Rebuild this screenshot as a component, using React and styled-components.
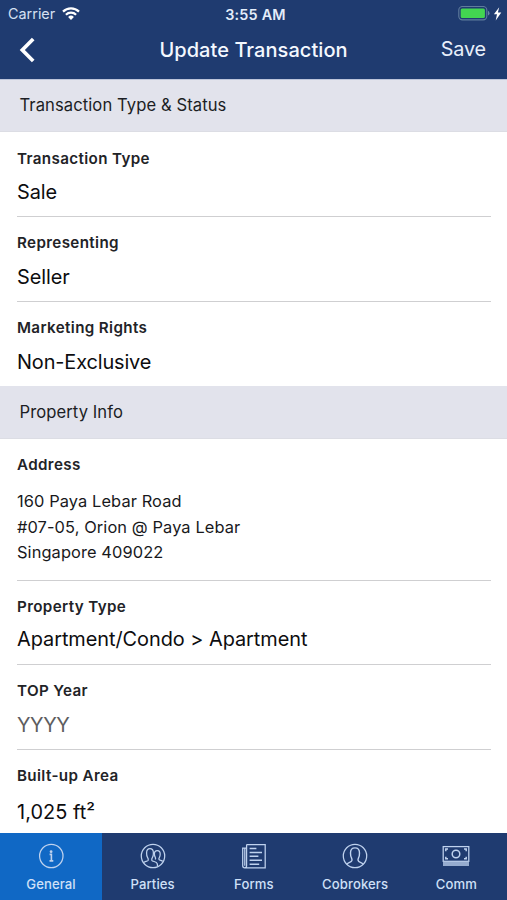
import React from "react";
import styled, { createGlobalStyle } from "styled-components";

const GlobalStyle = createGlobalStyle`
  *, *::before, *::after { box-sizing: border-box; }
  body {
    margin: 0;
    background: #fff;
    font-family: Inter, "Liberation Sans", sans-serif;
    color: #101114;
  }
`;

const Screen = styled.div`
  display: flex;
  flex-direction: column;
  height: 900px;
  overflow: hidden;
  background: #fff;
`;

const Header = styled.header`
  flex: none;
  height: 79px;
  background: #1f3b70;
  color: #f4f8ff;
  box-shadow: 0 1px 0 #bcc4da;
  z-index: 1;
`;

const StatusBar = styled.div`
  display: grid;
  grid-template-columns: 1fr auto 1fr;
  align-items: center;
  height: 28px;
  padding: 0 4px 0 8px;
`;

const Carrier = styled.div`
  display: flex;
  align-items: center;
  gap: 7px;
  font-size: 14.4px;
  line-height: 28px;
  color: #d5e0f2;
`;

const Clock = styled.div`
  font-size: 14.4px;
  font-weight: 600;
  letter-spacing: 0.2px;
  color: #e4edfa;
`;

const Power = styled.div`
  display: flex;
  justify-content: flex-end;
`;

const NavBar = styled.div`
  display: grid;
  grid-template-columns: 1fr auto 1fr;
  align-items: center;
  height: 43px;
  padding: 0 21px 0 19px;
`;

const BackButton = styled.button`
  display: flex;
  justify-self: start;
  padding: 0;
  border: 0;
  background: none;
  color: #fff;
`;

const Title = styled.h1`
  margin: 0;
  padding-left: 2px;
  font-size: 20px;
  font-weight: 500;
  letter-spacing: 0.06px;
`;

const SaveButton = styled.button`
  justify-self: end;
  padding: 0;
  border: 0;
  background: none;
  color: #e8effb;
  font: 400 19.8px/26px Inter, sans-serif;
  letter-spacing: -0.1px;
  margin-top: -1px;
`;

const Content = styled.main`
  flex: 1;
  min-height: 0;
  overflow: hidden;
`;

const SectionTitle = styled.h2`
  height: 53px;
  margin: 0;
  padding-left: 19.5px;
  background: #e2e3ec;
  border-bottom: 1px solid #dcdde4;
  color: #1c1e24;
  font-size: 16.6px;
  font-weight: 400;
  line-height: 53.5px;
  letter-spacing: 0.08px;
`;

const Field = styled.section`
  height: ${(p) => p.$height}px;
  margin: 0 16px 0 17px;
  padding-top: ${(p) => p.$top ?? 15}px;
  border-bottom: ${(p) => (p.$last ? "0" : "1px solid #cfcfd1")};
`;

const Label = styled.div`
  font-size: 15.2px;
  font-weight: 600;
  line-height: 22px;
  letter-spacing: 0.36px;
  color: #222327;
`;

const Value = styled.div`
  margin-top: ${(p) => p.$gap ?? 10}px;
  font-size: 19.9px;
  line-height: 26px;
  letter-spacing: ${(p) => p.$tracking ?? -0.06}px;
  color: ${(p) => (p.$placeholder ? "#5d5d60" : "#0d0d0f")};
`;

const Address = styled.address`
  margin-top: 13px;
  font-size: 16.4px;
  font-style: normal;
  line-height: 25.6px;
  letter-spacing: 0.1px;
  white-space: pre-line;
  color: #18191c;
`;

const TabBar = styled.nav`
  flex: none;
  display: grid;
  grid-template-columns: 102px repeat(4, 1fr);
  height: 67px;
  background: #1f3b70;
`;

const Tab = styled.button`
  display: flex;
  flex-direction: column;
  align-items: center;
  gap: 6px;
  padding: 10px 0 0;
  border: 0;
  background: ${(p) => (p.$active ? "#1068c5" : "transparent")};
  color: #bfd2ee;
`;

const TabLabel = styled.span`
  font: 500 13.1px/18px Inter, sans-serif;
  letter-spacing: 0.1px;
  color: #cfe0f7;
`;

const TabGlyph = styled.svg`
  display: block;
  width: 28px;
  height: 26px;
  fill: none;
  stroke: currentColor;
  stroke-width: 1.25;
`;

const WifiIcon = () => (
  <svg width="18" height="14" viewBox="0 0 18 14" fill="none" stroke="#fff" strokeWidth="2.2">
    <path d="M1 4.6a11.4 11.4 0 0 1 16 0" />
    <path d="M3.9 7.8a7.2 7.2 0 0 1 10.2 0" />
    <path d="M9 12.9 6.1 10a4.1 4.1 0 0 1 5.8 0Z" fill="#fff" stroke="none" />
  </svg>
);

const BatteryIcon = () => (
  <svg width="45" height="16" viewBox="0 0 45 16">
    <rect x=".8" y=".5" width="28" height="13.4" rx="3.6" fill="none" stroke="#5f7c9c" strokeWidth="1.1" />
    <rect x="2.7" y="2.4" width="24.2" height="9.6" rx="1.5" fill="#43d551" />
    <path d="M30 4.8q1.5.8 1.5 2.4T30 9.6Z" fill="#6c87a8" />
    <path d="M41.2 1.3 35.9 8.2h3.1l-1.3 6.2 5.6-7.9h-3.4Z" fill="#fff" />
  </svg>
);

const BackIcon = () => (
  <svg width="17" height="26" viewBox="0 0 17 26" fill="none" stroke="currentColor" strokeWidth="3.7">
    <path d="M14.2 2 3.3 13l10.9 11" />
  </svg>
);

const InfoGlyph = () => (
  <TabGlyph viewBox="0 0 28 26">
    <circle cx="14.3" cy="13" r="11.7" />
    <circle cx="14.1" cy="8.7" r="1.4" fill="currentColor" stroke="none" />
    <path d="M12.6 11.4h1.8v6.4M12.5 17.9h3.8" strokeWidth="1.6" />
  </TabGlyph>
);

const PartiesGlyph = () => (
  <TabGlyph viewBox="0 0 28 26">
    <circle cx="14" cy="13" r="11.7" />
    <path d="M4.5 19.7c1.2-1.3 4.2-1.3 4.7-2.5.4-1.1-.1-1.9-.8-3-.7-1-.8-2.6-.8-4.2 0-2.7 1.4-4.3 3.4-4.3s3.4 1.6 3.4 4.3c0 1.6-.1 3.2-.8 4.2-.7 1.1-1.2 1.9-.8 3 .6 1.5 4.7 1.2 5.4 3.4.2.8.3 1.8.3 2.7" />
    <path d="M16 16.4c.7-.5.8-1.2.3-2-.7-1.1-.9-2-.9-3.3 0-2.1 1.1-3.5 2.9-3.5s2.9 1.4 2.9 3.5c0 1.3-.1 2.3-.8 3.3-.6.9-.8 1.6-.3 2.2.6.9 2.8.7 3.7 1.8" />
  </TabGlyph>
);

const FormsGlyph = () => (
  <TabGlyph viewBox="0 0 28 26">
    <path d="M6.6 1.5h18.6v23.3H4.7c-1.1 0-2-.9-2-2V5.1h3.9M6.6 1.5v21.3c0 1.1-.8 2-1.9 2M4.8 5.1v17.6" />
    <path d="M9.6 5.4h6.8M9.6 9.4H22M9.6 13.3h8.8M9.6 17.3H22M9.6 21.2h9.6" strokeWidth="1.5" />
  </TabGlyph>
);

const PersonGlyph = () => (
  <TabGlyph viewBox="0 0 28 26">
    <circle cx="14" cy="13" r="11.7" />
    <path d="M6 21.3c1-2.2 4.2-1.8 4.9-3.7.4-1.2 0-2-.5-3-.7-1.2-.9-2.7-.9-4.7 0-3 1.8-5 4.5-5s4.5 2 4.5 5c0 2-.2 3.5-.9 4.7-.5 1-.9 1.8-.5 3 .7 1.9 3.9 1.5 4.9 3.7" strokeWidth="1.4" />
  </TabGlyph>
);

const MoneyGlyph = () => (
  <TabGlyph viewBox="0 0 28 26">
    <rect x="1.2" y="3.6" width="25.6" height="14.7" />
    <circle cx="14" cy="11" r="3.8" strokeWidth="1.5" />
    <path d="M3.8 8.2V6.1H6M22 6.1h2.2v2.1M3.8 13.7v2.1H6M22 15.8h2.2v-2.1" strokeWidth="1.5" />
    <path d="M1 20.1h26M1 21.9h26" strokeWidth="1.5" />
  </TabGlyph>
);

const tabs = [
  { name: "General", Glyph: InfoGlyph, active: true },
  { name: "Parties", Glyph: PartiesGlyph },
  { name: "Forms", Glyph: FormsGlyph },
  { name: "Cobrokers", Glyph: PersonGlyph },
  { name: "Comm", Glyph: MoneyGlyph },
];

export default function App() {
  return (
    <>
      <GlobalStyle />
      <Screen>
        <Header>
          <StatusBar>
            <Carrier>Carrier<WifiIcon /></Carrier>
            <Clock>3:55 AM</Clock>
            <Power><BatteryIcon /></Power>
          </StatusBar>
          <NavBar>
            <BackButton aria-label="Back"><BackIcon /></BackButton>
            <Title>Update Transaction</Title>
            <SaveButton>Save</SaveButton>
          </NavBar>
        </Header>
        <Content>
          <SectionTitle>Transaction Type &amp; Status</SectionTitle>
          <Field $height={85} $top={16}>
            <Label>Transaction Type</Label>
            <Value $gap={9}>Sale</Value>
          </Field>
          <Field $height={85}>
            <Label>Representing</Label>
            <Value>Seller</Value>
          </Field>
          <Field $height={84} $last>
            <Label>Marketing Rights</Label>
            <Value $tracking={-0.12}>Non-Exclusive</Value>
          </Field>
          <SectionTitle>Property Info</SectionTitle>
          <Field $height={142} $top={15}>
            <Label>Address</Label>
            <Address>{"160 Paya Lebar Road\n#07-05, Orion @ Paya Lebar\nSingapore 409022"}</Address>
          </Field>
          <Field $height={84}>
            <Label>Property Type</Label>
            <Value $gap={8} $tracking={-0.04}>Apartment/Condo &gt; Apartment</Value>
          </Field>
          <Field $height={85}>
            <Label>TOP Year</Label>
            <Value $placeholder $tracking={-0.4}>YYYY</Value>
          </Field>
          <Field $height={83} $last>
            <Label>Built-up Area</Label>
            <Value $gap={12} $tracking={0.05}>1,025 ft²</Value>
          </Field>
        </Content>
        <TabBar>
          {tabs.map(({ name, Glyph, active }) => (
            <Tab key={name} $active={active}>
              <Glyph />
              <TabLabel>{name}</TabLabel>
            </Tab>
          ))}
        </TabBar>
      </Screen>
    </>
  );
}
